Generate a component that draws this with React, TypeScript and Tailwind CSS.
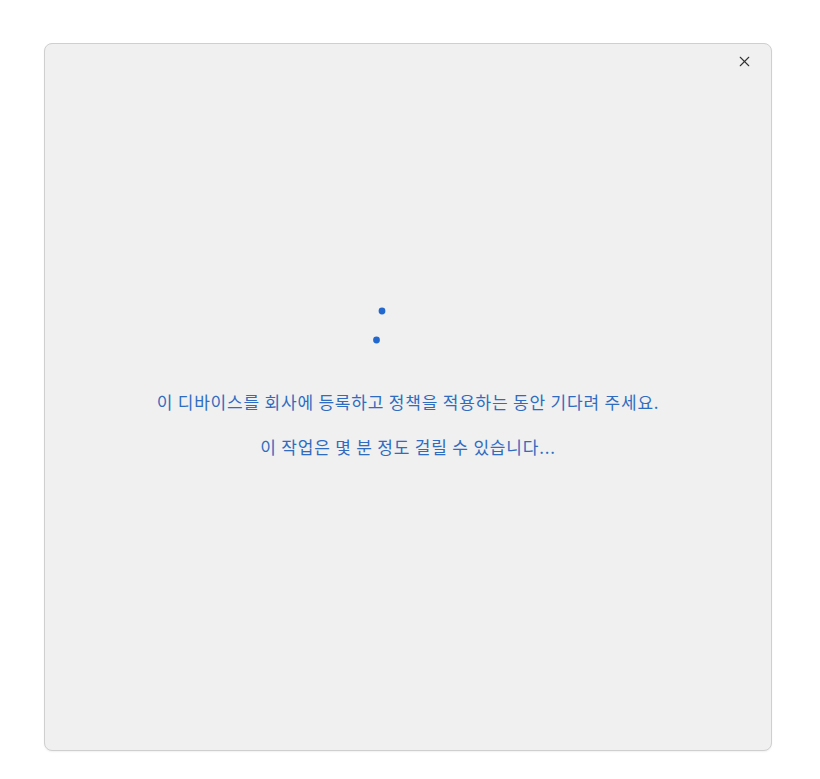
import { X } from "lucide-react";

const FONT = "font-['Segoe_UI','Noto_Sans_CJK_KR',sans-serif]";

// Loading ring: two dots caught mid-rotation
function Spinner() {
  return (
    <svg width="64" height="64" viewBox="0 0 64 64" className="block overflow-visible">
      <circle cx="6" cy="13" r="3.4" fill="#2268cf" />
      <circle cx="0.5" cy="42" r="3.4" fill="#2268cf" />
    </svg>
  );
}

export default function App() {
  return (
    <div className={`w-full h-[779px] bg-white pt-[43px] pl-[44px] ${FONT}`}>
      <div className="relative w-[728px] h-[708px] rounded-lg border border-[#cfcfcf] bg-[#f0f0f0] shadow-[0_1px_2px_rgba(0,0,0,0.06)]">
        <button
          className="absolute top-[5px] right-[14px] p-1 text-[#333]"
          aria-label="닫기"
        >
          <X className="h-[17px] w-[17px]" strokeWidth={1.5} />
        </button>

        <div className="flex flex-col items-center pt-[254px]">
          <Spinner />
          <p className="mt-[29px] text-[17px] leading-[22px] tracking-[0.8px] text-[#2f6cc0]">
            이 디바이스를 회사에 등록하고 정책을 적용하는 동안 기다려 주세요.
          </p>
          <p className="mt-[23px] text-[17px] leading-[22px] tracking-[0.8px] text-[#2f6cc0]">
            이 작업은 몇 분 정도 걸릴 수 있습니다...
          </p>
        </div>
      </div>
    </div>
  );
}
